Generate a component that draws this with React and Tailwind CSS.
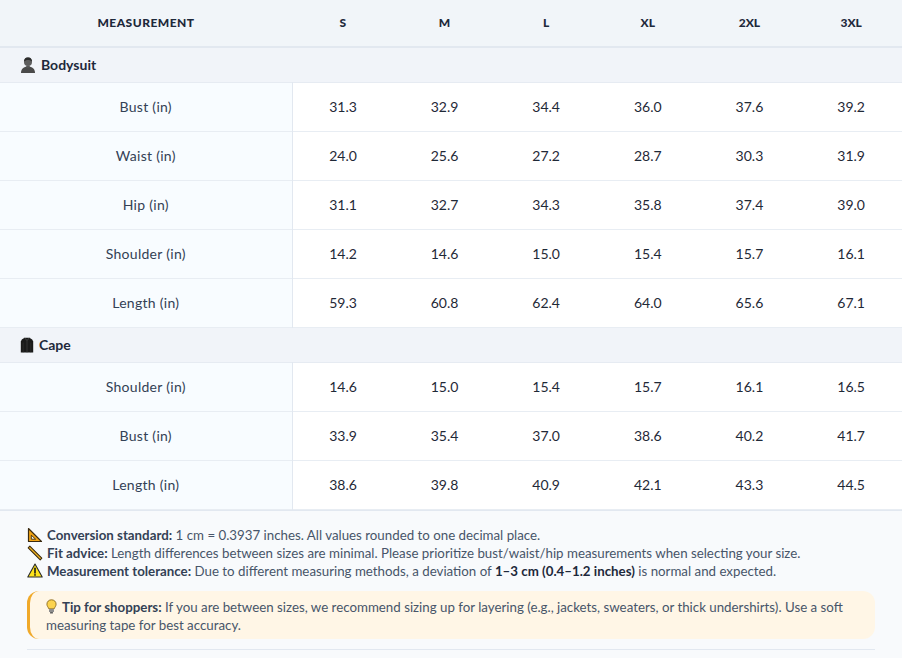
import React from "react";

const SIZES = ["S", "M", "L", "XL", "2XL", "3XL"];

const GROUPS = [
  {
    name: "Bodysuit",
    icon: "bust",
    rows: [
      ["Bust (in)", ["31.3", "32.9", "34.4", "36.0", "37.6", "39.2"]],
      ["Waist (in)", ["24.0", "25.6", "27.2", "28.7", "30.3", "31.9"]],
      ["Hip (in)", ["31.1", "32.7", "34.3", "35.8", "37.4", "39.0"]],
      ["Shoulder (in)", ["14.2", "14.6", "15.0", "15.4", "15.7", "16.1"]],
      ["Length (in)", ["59.3", "60.8", "62.4", "64.0", "65.6", "67.1"]],
    ],
  },
  {
    name: "Cape",
    icon: "coat",
    rows: [
      ["Shoulder (in)", ["14.6", "15.0", "15.4", "15.7", "16.1", "16.5"]],
      ["Bust (in)", ["33.9", "35.4", "37.0", "38.6", "40.2", "41.7"]],
      ["Length (in)", ["38.6", "39.8", "40.9", "42.1", "43.3", "44.5"]],
    ],
  },
];

// small emoji-like drawings, the page has no emoji font
function BustIcon() {
  return (
    <svg width="16" height="17" viewBox="0 0 16 17" className="shrink-0">
      <path d="M1 17c0-4.2 2.8-6.4 7-6.4s7 2.2 7 6.4z" fill="#4a4a4a" />
      <path d="M6.3 9.6h3.4v2.2H6.3z" fill="#555" />
      <circle cx="8" cy="6" r="4" fill="#5e5e5e" />
      <path d="M3.9 5.8C4 2.6 5.8 1.2 8 1.2s4 1.4 4.1 4.6c-1-1.1-2.4-1.7-4.1-1.7S4.9 4.7 3.9 5.8z" fill="#2c2c2c" />
    </svg>
  );
}

function CoatIcon() {
  return (
    <svg width="14" height="16" viewBox="0 0 14 16" className="shrink-0">
      <path d="M4.6 0.8h4.8l2.8 1.6 1 2.2V15.4H0.8V4.6l1-2.2z" fill="#1a1a1a" />
      <path d="M4.6 0.8L7 3.6l2.4-2.8" fill="none" stroke="#4a4a4a" strokeWidth="0.9" />
      <path d="M7 3.6v11.8" stroke="#3c3c3c" strokeWidth="0.8" />
      <path d="M3.2 5.5v9.9M10.8 5.5v9.9" stroke="#333" strokeWidth="0.6" />
    </svg>
  );
}

function TriangleRulerIcon() {
  return (
    <svg width="16" height="16" viewBox="0 0 16 16" className="shrink-0">
      <path d="M1.5 1.5L14.5 14.5H1.5z" fill="#f2a516" stroke="#3a2a10" strokeWidth="1.2" strokeLinejoin="round" />
      <path d="M4.3 8.2L8.6 12.2H4.3z" fill="#fdf5e4" stroke="#3a2a10" strokeWidth="0.9" />
    </svg>
  );
}

function RulerIcon() {
  return (
    <svg width="16" height="16" viewBox="0 0 16 16" className="shrink-0">
      <path d="M2.8 1.2L14.8 13.2L13.2 14.8L1.2 2.8z" fill="#f4b41a" stroke="#3a2a10" strokeWidth="1.1" strokeLinejoin="round" />
    </svg>
  );
}

function WarnIcon() {
  return (
    <svg width="16" height="15" viewBox="0 0 16 15" className="shrink-0">
      <path d="M8 1L15.2 14H0.8z" fill="#fde21a" stroke="#2b2b2b" strokeWidth="1.1" strokeLinejoin="round" />
      <path d="M8 5.3v4.6" stroke="#1a1a1a" strokeWidth="1.6" strokeLinecap="round" />
      <circle cx="8" cy="11.9" r="0.9" fill="#1a1a1a" />
    </svg>
  );
}

function BulbIcon() {
  return (
    <svg width="11" height="15" viewBox="0 0 11 15" className="block">
      <path d="M5.5 0.8C2.8 0.8 0.9 2.7 0.9 5.2c0 1.9 1.4 3 1.9 4.6h5.4c.5-1.6 1.9-2.7 1.9-4.6C10.1 2.7 8.2 0.8 5.5 0.8z" fill="#fcd34d" stroke="#7a5a12" strokeWidth="0.8" />
      <rect x="3" y="10" width="5" height="3" rx="0.6" fill="#8d8d8d" />
      <rect x="4" y="13" width="3" height="1.4" rx="0.5" fill="#5f5f5f" />
    </svg>
  );
}

function GroupRow({ name, icon }) {
  return (
    <tr className="bg-[#f1f4f9] border-b border-[#e6ebf2]">
      <td colSpan={7} className="h-[35px] px-5">
        <div className="flex items-center gap-[5px] text-[14px] font-bold text-[#1e293b]">
          {icon === "bust" ? <BustIcon /> : <CoatIcon />}
          <span>{name}</span>
        </div>
      </td>
    </tr>
  );
}

function DataRow({ label, values }) {
  return (
    <tr className="border-b border-[#e8edf3]">
      <td className="h-[49px] bg-[#f8fcff] border-r border-[#e2e8f0] text-center text-[14px] tracking-[0.02em] text-[#334155]">
        {label}
      </td>
      {values.map((v, i) => (
        <td key={i} className="h-[49px] bg-white text-center text-[14px] text-[#1f2937]">
          {v}
        </td>
      ))}
    </tr>
  );
}

export default function App() {
  return (
    <div className="w-[902px] h-[658px] overflow-hidden bg-[#f8fafc] font-['Lato',sans-serif]">
      <table className="w-full table-fixed border-collapse">
        <colgroup>
          <col className="w-[292px]" />
          {SIZES.map((s) => (
            <col key={s} />
          ))}
        </colgroup>
        <thead>
          <tr className="bg-[#f1f5f9] border-b-2 border-[#e2e8f0]">
            <th className="h-[47px] text-center text-[12px] font-black uppercase tracking-[0.04em] text-[#1e293b]">
              Measurement
            </th>
            {SIZES.map((s) => (
              <th key={s} className="h-[47px] text-center text-[12px] font-black text-[#1e293b]">
                {s}
              </th>
            ))}
          </tr>
        </thead>
        <tbody>
          {GROUPS.map((g) => (
            <React.Fragment key={g.name}>
              <GroupRow name={g.name} icon={g.icon} />
              {g.rows.map(([label, values]) => (
                <DataRow key={label} label={label} values={values} />
              ))}
            </React.Fragment>
          ))}
        </tbody>
      </table>

      {/* notes */}
      <div className="border-t border-[#e2e8f0] px-[27px] pt-[15px] text-[13.3px] leading-[18px] text-[#475569]">
        <div className="flex items-center gap-[4px]">
          <TriangleRulerIcon />
          <p>
            <b className="text-[#334155]">Conversion standard:</b> 1 cm = 0.3937 inches. All values rounded to one decimal place.
          </p>
        </div>
        <div className="flex items-center gap-[4px]">
          <RulerIcon />
          <p>
            <b className="text-[#334155]">Fit advice:</b> Length differences between sizes are minimal. Please prioritize bust/waist/hip measurements when selecting your size.
          </p>
        </div>
        <div className="flex items-center gap-[4px]">
          <WarnIcon />
          <p>
            <b className="text-[#334155]">Measurement tolerance:</b> Due to different measuring methods, a deviation of{" "}
            <b className="text-[#1e293b]">1–3 cm (0.4–1.2 inches)</b> is normal and expected.
          </p>
        </div>

        <div className="mt-[11px] rounded-[12px] border-l-[3px] border-[#f0a92a] bg-[#fff6e6] px-4 pt-[7px] pb-[5px]">
          <div className="flex items-center gap-[5px]">
            <BulbIcon />
            <p>
              <b className="text-[#334155]">Tip for shoppers:</b> If you are between sizes, we recommend sizing up for layering (e.g., jackets, sweaters, or thick undershirts). Use a soft
            </p>
          </div>
          <p>measuring tape for best accuracy.</p>
        </div>
        <div className="mt-[10px] border-t border-[#e2e8f0]" />
      </div>
    </div>
  );
}
